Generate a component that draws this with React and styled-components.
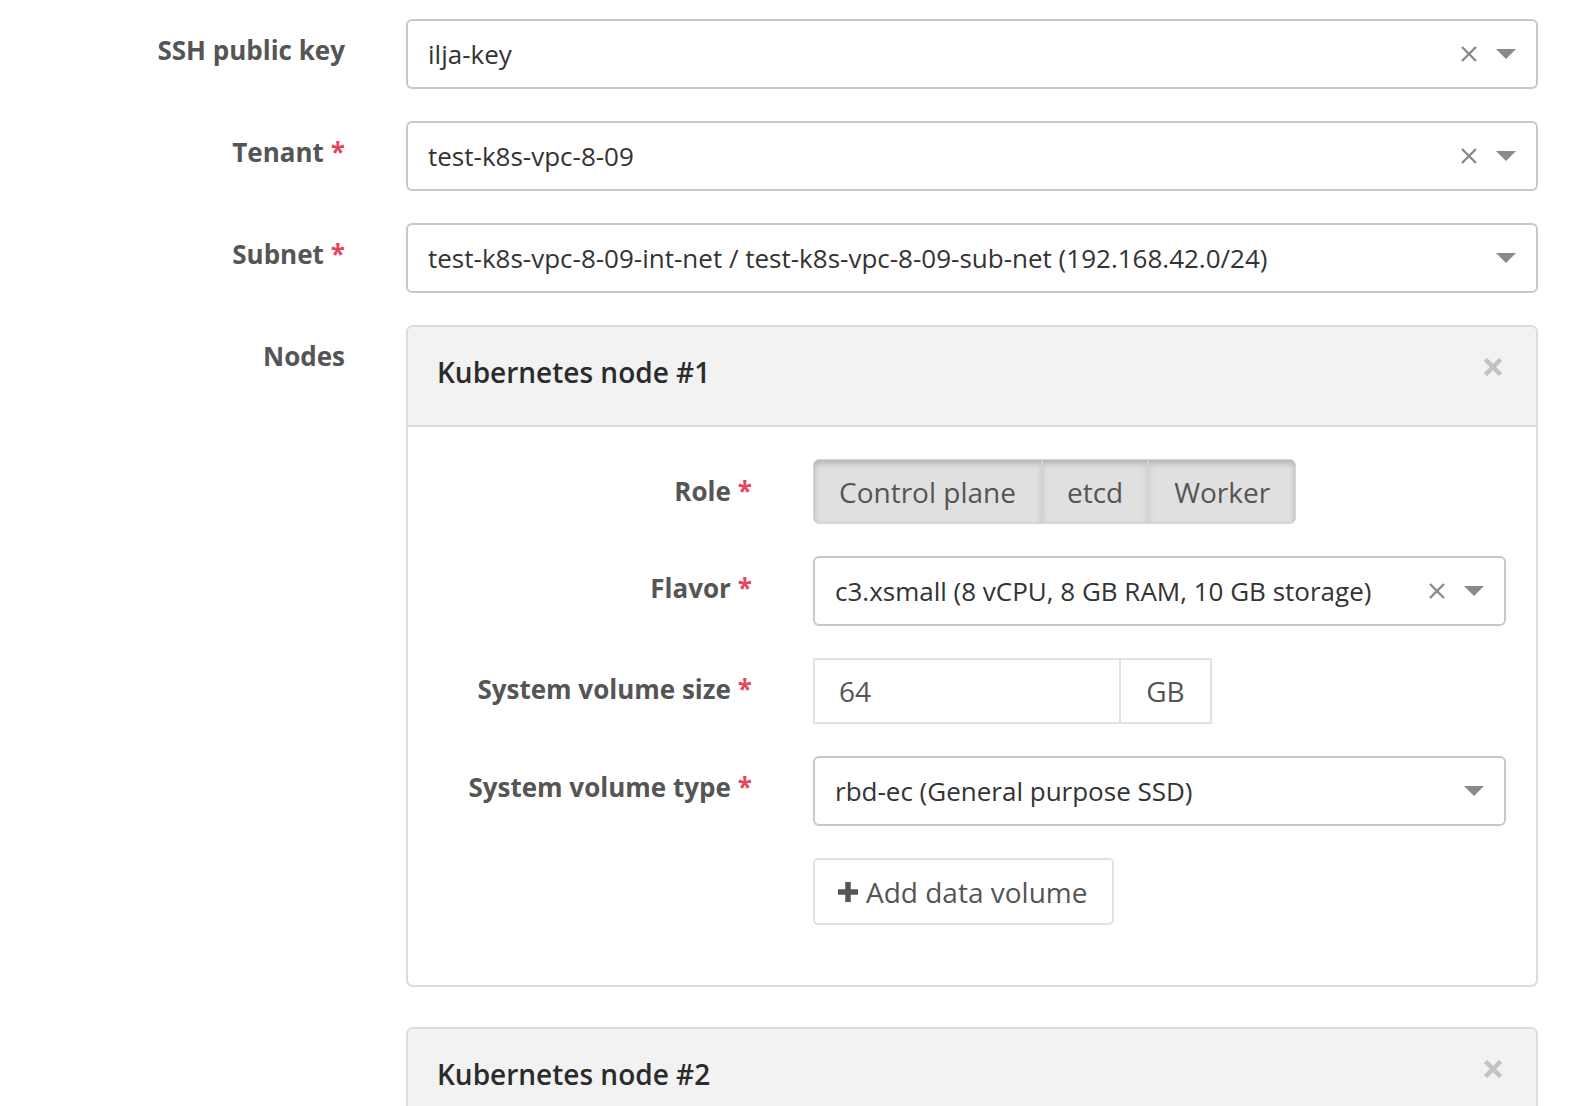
import React from "react";
import styled, { createGlobalStyle } from "styled-components";

const GlobalStyle = createGlobalStyle`
  html, body {
    margin: 0;
    padding: 0;
    background: #fff;
  }
  body {
    font-family: "Open Sans", "Liberation Sans", sans-serif;
    color: #333;
  }
`;

const Page = styled.div`
  padding: 19px 40px 0 0;
  height: 1106px;
  box-sizing: border-box;
  overflow: hidden;
`;

const Row = styled.div`
  display: grid;
  grid-template-columns: ${(p) => p.$labelWidth}px 1fr;
  column-gap: 61px;
  align-items: start;
  margin-bottom: 32px;
`;

const Label = styled.label`
  text-align: right;
  font-weight: 700;
  font-size: 26px;
  color: #555;
  white-space: nowrap;
  padding-top: ${(p) => p.$top}px;
  line-height: 1.2;
`;

const Star = styled.span`
  color: #e8455d;
  margin-left: 7px;
`;

const SelectBox = styled.div`
  display: flex;
  align-items: center;
  height: 70px;
  box-sizing: border-box;
  border: 2px solid #c8c8c8;
  border-radius: 6px;
  padding: 0 20px 0 20px;
  font-size: 26px;
  color: #333;
  background: #fff;
`;

const SelectValue = styled.span`
  flex: 1;
  white-space: nowrap;
  overflow: hidden;
`;

const SelectIcons = styled.span`
  display: flex;
  align-items: center;
  gap: 18px;
`;

const ClearIcon = () => (
  <svg width="18" height="18" viewBox="0 0 18 18">
    <path d="M2 2L16 16M16 2L2 16" stroke="#8a8a8a" strokeWidth="2.4" />
  </svg>
);

const Caret = () => (
  <svg width="20" height="10" viewBox="0 0 20 10">
    <path d="M0 0H20L10 10Z" fill="#8a8a8a" />
  </svg>
);

const Select = ({ value, clearable }) => (
  <SelectBox>
    <SelectValue>{value}</SelectValue>
    <SelectIcons>
      {clearable && <ClearIcon />}
      <Caret />
    </SelectIcons>
  </SelectBox>
);

const Card = styled.div`
  border: 2px solid #dcdcdc;
  border-radius: 7px;
  overflow: hidden;
  margin-bottom: ${(p) => p.$mb || 0}px;
`;

const CardHeader = styled.div`
  display: flex;
  align-items: center;
  justify-content: space-between;
  background: #f2f2f2;
  height: 100px;
  padding: 0 33px 8px 29px;
  box-sizing: border-box;
  border-bottom: 2px solid #dcdcdc;
`;

const CardTitle = styled.h3`
  margin: 0;
  font-size: 28px;
  font-weight: 600;
  color: #2b2b2b;
`;

const CloseIcon = () => (
  <svg width="20" height="20" viewBox="0 0 20 20" style={{ marginBottom: 10 }}>
    <path d="M2.5 2.5L17.5 17.5M17.5 2.5L2.5 17.5" stroke="#c2c2c2" strokeWidth="4.5" />
  </svg>
);

const CardBody = styled.div`
  padding: 32px 30px 60px 0;
`;

const InnerRow = styled.div`
  display: grid;
  grid-template-columns: 344px 1fr;
  column-gap: 61px;
  align-items: start;
  margin-bottom: 32px;
  &:last-child {
    margin-bottom: 0;
  }
`;

const Segmented = styled.div`
  display: inline-flex;
  height: 65px;
  border-radius: 6px;
  overflow: hidden;
  background: #e0e0e0;
  box-shadow: inset 0 3px 6px rgba(0, 0, 0, 0.13);
  border: 1px solid #d6d6d6;
  box-sizing: border-box;
`;

const Segment = styled.span`
  display: flex;
  align-items: center;
  padding: 0 ${(p) => p.$pad}px;
  font-size: 28px;
  color: #555;
  border-left: ${(p) => (p.$first ? "none" : "2px solid #d2d2d2")};
  box-shadow: inset 0 3px 6px rgba(0, 0, 0, 0.1);
`;

const InputGroup = styled.div`
  display: flex;
  height: 66px;
  width: 399px;
  box-sizing: border-box;
  border: 2px solid #e2e2e2;
`;

const NumberField = styled.span`
  flex: 1;
  display: flex;
  align-items: center;
  padding-left: 24px;
  font-size: 28px;
  color: #555;
`;

const Addon = styled.span`
  width: 89px;
  display: flex;
  align-items: center;
  justify-content: center;
  border-left: 2px solid #e2e2e2;
  font-size: 28px;
  color: #555;
`;

const AddButton = styled.button`
  display: inline-flex;
  align-items: center;
  gap: 7px;
  height: 67px;
  width: 301px;
  box-sizing: border-box;
  padding: 0 22px;
  border: 2px solid #e2e2e2;
  border-radius: 5px;
  background: #fff;
  font-family: "Open Sans", "Liberation Sans", sans-serif;
  font-size: 28px;
  color: #555;
`;

const PlusIcon = () => (
  <svg width="22" height="22" viewBox="0 0 22 22">
    <path d="M11 1V21M1 11H21" stroke="#555" strokeWidth="5.5" />
  </svg>
);

const Required = ({ children }) => (
  <>
    {children}
    <Star>*</Star>
  </>
);

const NodeCard = ({ index, open, mb }) => (
  <Card $mb={mb}>
    <CardHeader>
      <CardTitle>Kubernetes node #{index}</CardTitle>
      <CloseIcon />
    </CardHeader>
    {open && (
      <CardBody>
        <InnerRow>
          <Label $top={17}>
            <Required>Role</Required>
          </Label>
          <div>
            <Segmented>
              <Segment $first $pad={25}>Control plane</Segment>
              <Segment $pad={24}>etcd</Segment>
              <Segment $pad={25}>Worker</Segment>
            </Segmented>
          </div>
        </InnerRow>
        <InnerRow>
          <Label $top={17}>
            <Required>Flavor</Required>
          </Label>
          <Select
            value="c3.xsmall (8 vCPU, 8 GB RAM, 10 GB storage)"
            clearable
          />
        </InnerRow>
        <InnerRow>
          <Label $top={16}>
            <Required>System volume size</Required>
          </Label>
          <InputGroup>
            <NumberField>64</NumberField>
            <Addon>GB</Addon>
          </InputGroup>
        </InnerRow>
        <InnerRow>
          <Label $top={16}>
            <Required>System volume type</Required>
          </Label>
          <Select value="rbd-ec (General purpose SSD)" />
        </InnerRow>
        <InnerRow>
          <span />
          <div>
            <AddButton>
              <PlusIcon />
              Add data volume
            </AddButton>
          </div>
        </InnerRow>
      </CardBody>
    )}
  </Card>
);

const App = () => {
  return (
    <Page>
      <GlobalStyle />
      <Row $labelWidth={345}>
        <Label $top={16}>SSH public key</Label>
        <Select value="ilja-key" clearable />
      </Row>
      <Row $labelWidth={345}>
        <Label $top={16}>
          <Required>Tenant</Required>
        </Label>
        <Select value="test-k8s-vpc-8-09" clearable />
      </Row>
      <Row $labelWidth={345}>
        <Label $top={16}>
          <Required>Subnet</Required>
        </Label>
        <Select value="test-k8s-vpc-8-09-int-net / test-k8s-vpc-8-09-sub-net (192.168.42.0/24)" />
      </Row>
      <Row $labelWidth={345}>
        <Label $top={16}>Nodes</Label>
        <div>
          <NodeCard index={1} open mb={40} />
          <NodeCard index={2} />
        </div>
      </Row>
    </Page>
  );
};

export default App;
